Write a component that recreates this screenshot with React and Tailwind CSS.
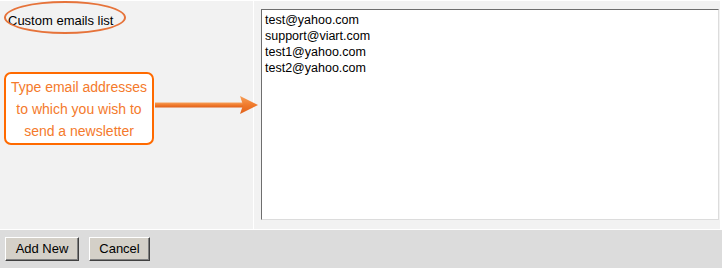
import React from "react";

const emails = ["test@yahoo.com", "support@viart.com", "test1@yahoo.com", "test2@yahoo.com"];

const Button = ({ children, className }) => (
  <button
    className={`h-[24px] bg-[#d4d0c8] border border-t-white border-l-white border-b-[#404040] border-r-[#404040] shadow-[inset_-1px_-1px_0_#808080] text-[13px] text-black ${className}`}
  >
    {children}
  </button>
);

export default function App() {
  return (
    <div
      className="w-[722px] h-[268px] bg-white flex flex-col overflow-hidden"
      style={{ fontFamily: '"Liberation Sans", Arial, sans-serif' }}
    >
      <div className="flex gap-[1px] mt-[1px] h-[228px] pr-[2px]">
        <div className="relative w-[253px] bg-[#f2f2f2] pt-[7px] pl-[8px]">
          <span className="text-[13px] leading-[16px] text-black">Custom emails list</span>
          <div className="absolute left-[4px] top-[0px] w-[122px] h-[33px] rounded-[50%] border-2 border-[#e6733a]" />

          <div className="absolute left-[4px] top-[71px] w-[150px] h-[73px] rounded-[7px] border-2 border-[#ff6a00] bg-white flex flex-col items-center justify-center text-[14px] leading-[22px] text-[#f47a2c]">
            <span>Type email addresses</span>
            <span>to which you wish to</span>
            <span>send a newsletter</span>
          </div>

          <svg className="absolute left-[155px] top-[94px]" width="104" height="20" viewBox="0 0 104 20">
            <defs>
              <linearGradient id="ar" x1="0" y1="0" x2="0" y2="1">
                <stop offset="0" stopColor="#f7a05a" />
                <stop offset="0.5" stopColor="#f07a2c" />
                <stop offset="1" stopColor="#e0601a" />
              </linearGradient>
            </defs>
            <rect x="0" y="7.5" width="88" height="5" fill="url(#ar)" />
            <polygon points="85,1 103,10 85,19 88,10" fill="url(#ar)" />
          </svg>
        </div>
        <div className="flex-1 bg-[#f2f2f2] pl-[7px] pt-[8px]">
          <div className="w-[458px] h-[211px] bg-white border border-t-[#6e6e6e] border-l-[#6e6e6e] border-b-[#dcdcdc] border-r-[#dcdcdc] pl-[3px] pt-[2px] text-[12.5px] leading-[16px] text-black">
            {emails.map((e) => (
              <div key={e}>{e}</div>
            ))}
          </div>
        </div>
      </div>
      <div className="mt-[1px] flex-1 bg-[#dcdcdc] flex items-start gap-[10px] pl-[5px] pt-[7px]">
        <Button className="w-[74px]">Add New</Button>
        <Button className="w-[61px]">Cancel</Button>
      </div>
    </div>
  );
}
